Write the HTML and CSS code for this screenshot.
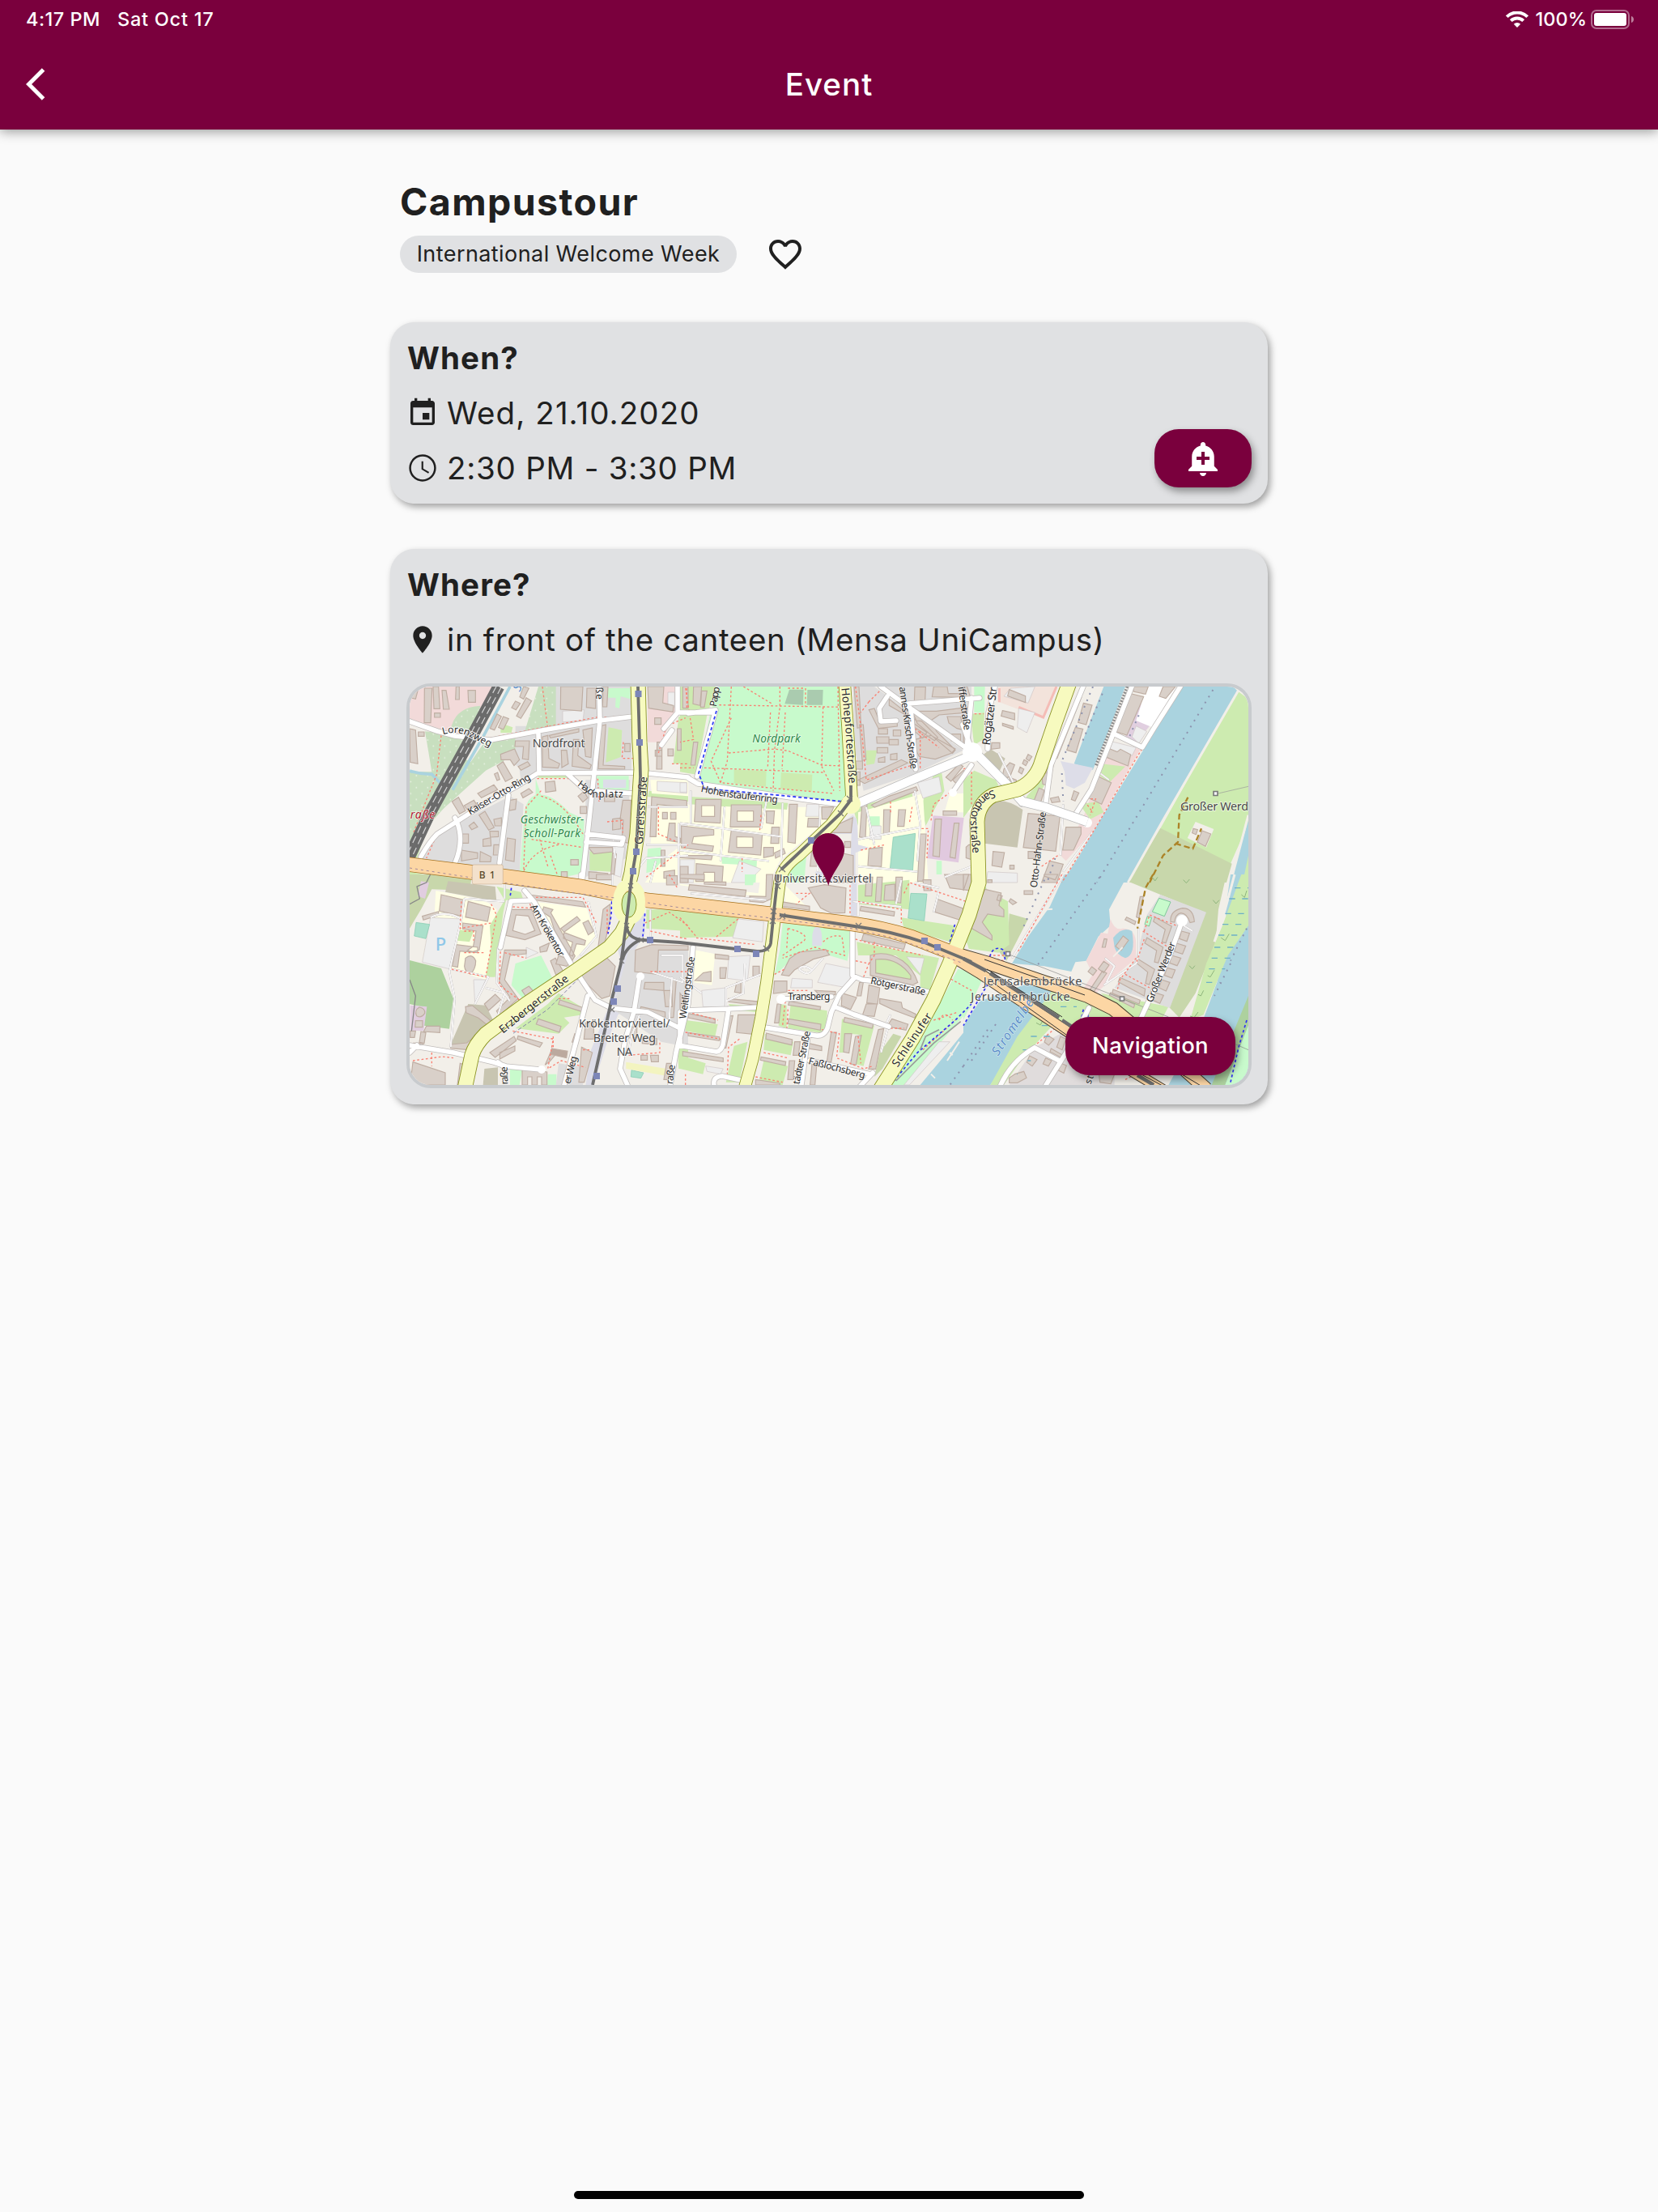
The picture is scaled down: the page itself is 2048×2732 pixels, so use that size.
FILE: index.html
```html
<!DOCTYPE html>
<html lang="en">
<head>
<meta charset="utf-8">
<title>Event</title>
<link rel="stylesheet" href="styles.css">
</head>
<body>
<header class="app-header">
  <div class="status-bar">
    <div class="status-left"><span class="time">4:17 PM</span><span class="date">Sat Oct 17</span></div>
    <div class="status-right">
      <svg class="wifi" viewBox="0 0 28 20"><path d="M14 20l-4.2-4.3a6 6 0 0 1 8.4 0z"/><path class="arc" d="M6.3 11.6a11 11 0 0 1 15.4 0M1.3 6.7a18 18 0 0 1 25.4 0"/></svg>
      <span class="percent">100%</span>
      <svg class="battery" viewBox="0 0 53 24"><rect class="shell" x="1" y="1" width="46" height="22" rx="6"/><rect x="4" y="4" width="40" height="16" rx="3"/><path class="nub" d="M50 8c4 1 4 7 0 8z"/></svg>
    </div>
  </div>
  <div class="nav-bar">
    <svg class="back" viewBox="0 0 24 24"><path d="M11.67 3.87L9.9 2.1 0 12l9.9 9.9 1.77-1.77L3.54 12z"/></svg>
    <h1 class="nav-title">Event</h1>
  </div>
</header>

<main class="content">
  <section class="intro">
    <h2 class="event-title">Campustour</h2>
    <div class="tag-row">
      <span class="chip"><span class="chip-text">International Welcome Week</span></span>
      <svg class="heart" viewBox="0 0 24 24"><path d="M16.5 3c-1.74 0-3.41.81-4.5 2.09C10.91 3.81 9.24 3 7.5 3 4.42 3 2 5.42 2 8.5c0 3.78 3.4 6.86 8.55 11.54L12 21.35l1.45-1.32C18.6 15.36 22 12.28 22 8.5 22 5.42 19.58 3 16.5 3zm-4.4 15.55l-.1.1-.1-.1C7.14 14.24 4 11.39 4 8.5 4 6.5 5.5 5 7.5 5c1.54 0 3.04.99 3.57 2.36h1.87C13.46 5.99 14.96 5 16.5 5c2 0 3.5 1.5 3.5 3.5 0 2.89-3.14 5.74-7.9 10.05z"/></svg>
    </div>
  </section>

  <section class="card when">
    <div>
      <h3 class="card-title">When?</h3>
      <div class="row"><svg class="icon" viewBox="0 0 24 24"><path d="M17 12h-5v5h5v-5zM16 1v2H8V1H6v2H5c-1.11 0-1.99.9-1.99 2L3 19c0 1.1.89 2 2 2h14c1.1 0 2-.9 2-2V5c0-1.1-.9-2-2-2h-1V1h-2zm3 18H5V8h14v11z"/></svg><span class="t-date">Wed, 21.10.2020</span></div>
      <div class="row"><svg class="icon" viewBox="0 0 24 24"><path d="M11.99 2C6.47 2 2 6.48 2 12s4.47 10 9.99 10C17.52 22 22 17.52 22 12S17.52 2 11.99 2zM12 20.5c-4.7 0-8.5-3.8-8.5-8.5s3.8-8.5 8.5-8.5 8.5 3.8 8.5 8.5-3.8 8.500-8.500 8.500zM12.500 7H11.200v6.100l5 3 .7-1.100-4.400-2.600z"/></svg><span class="t-time">2:30 PM - 3:30 PM</span></div>
    </div>
    <button class="btn btn-bell"><svg viewBox="0 0 24 24"><path d="M10.01 21.01c0 1.1.89 1.99 1.99 1.99s1.99-.89 1.99-1.99h-3.98zm8.87-4.19V11c0-3.25-2.25-5.97-5.29-6.69v-.72C13.59 2.71 12.88 2 12 2s-1.59.71-1.59 1.59v.72C7.37 5.03 5.12 7.75 5.12 11v5.82L3 18.94V20h18v-1.06l-2.12-2.12zM16 13.01h-3v3h-2v-3H8V11h3V8h2v3h3v2.01z"/></svg></button>
  </section>

  <section class="card where">
    <h3 class="card-title">Where?</h3>
    <div class="row"><svg class="icon" viewBox="0 0 24 24"><path d="M12 2C8.13 2 5 5.13 5 9c0 5.25 7 13 7 13s7-7.75 7-13c0-3.87-3.13-7-7-7zm0 9.5c-1.38 0-2.5-1.12-2.5-2.5s1.12-2.5 2.5-2.5 2.5 1.12 2.5 2.5-1.12 2.5-2.5 2.5z"/></svg><span class="t-place">in front of the canteen (Mensa UniCampus)</span></div>
    <div class="map">
      <svg class="map-svg" viewBox="506 848 1036 492">
        <defs>
          <pattern id="orchard" width="42" height="44" patternUnits="userSpaceOnUse"><rect width="42" height="44" fill="#c8dfbf"/><circle cx="10" cy="10" r="3" fill="#e3efdd"/><circle cx="31" cy="32" r="3" fill="#e3efdd"/></pattern>
          <path id="hohe" d="M598 60 L612 200 L626 420"/>
          <path id="sand" d="M112 437 C60 452 24 500 26 560 C27 620 34 650 38 710"/>
          <path id="hst" d="M76 443 L165 462 L370 486"/>
          <path id="lor" d="M172 232 C215 218 250 228 278 244 L340 275"/>
        </defs>

        <!-- land use -->
        <g transform="translate(490 830) scale(.33333)">
          <path class="resid" d="M585 54H870V375H520L440 345V200L585 200zM60 690L150 600 420 460 470 490 455 745zM700 400H865L850 690 700 760zM440 250L520 235 520 370 460 400z"/>
          <path class="indus" d="M48 54H360L250 260 130 220 48 190zM930 54H1040V140L980 260H930z"/>
          <path class="orch" d="M205 195Q225 130 310 125L290 220 200 210zM105 220L280 240 180 440 100 560 48 650V370H130zM325 260L440 240V305L330 365 250 420 90 600 200 440zM525 54H590V210L470 235z"/>
          <path class="orch" d="M250 320L330 365 80 590 48 690V640L150 500z"/>
          <path class="park" d="M515 395L535 455Q580 455 640 520L695 545 690 745 600 765 455 745 475 510Q485 465 515 455zM780 60H865V100L830 90 825 135 810 130 812 95 780 95zM740 385H860V445L755 440zM930 655L980 650V730L925 745z"/>
          <path class="grass" d="M785 205L835 215 830 315 775 335zM525 380L640 378 650 392H525zM935 440L1080 455V480L930 462zM715 665L800 655 795 740 715 735zM385 190L430 205 425 225 385 225zM48 740L200 770H48zM1045 165H1080V340H1025zM60 640L105 600 75 690 48 700z"/>
          <path class="edu" d="M940 400H1080V460L945 450zM960 480L1080 500V640L940 640zM1060 640H1080V780H920L990 690z"/>
          <path class="lot" d="M615 145L695 140 690 180 615 185zM800 640L845 650 830 760 800 750zM1005 75H1030V130H1005zM965 405L1075 410V450L965 440z"/>
          <path class="ped" d="M765 398H850V430H765z"/>
          <path class="canal" d="M420 54L320 240 207 437M48 366Q90 380 130 378L160 410"/>
        </g>
        <g transform="translate(840 830) scale(.33333)">
          <path class="grass" d="M0 54H135L100 160 60 380 0 370zM40 462L400 485 395 515 40 490zM680 285L720 280 725 360 680 420zM940 380L970 375 980 440 910 570 895 490zM640 500L860 450 880 560 680 640zM670 650L860 600V745L670 730z"/>
          <path class="edu" d="M0 490L400 510 385 670 330 780H0zM400 500H600L380 690zM660 520L900 450 920 780H660zM1000 450H1080V520H980z"/>
          <path class="park" d="M145 54H600L625 440 600 480 340 450 90 430 68 380 110 160zM700 535H740V575H700zM385 750L470 660 460 780H380zM155 685L285 700 280 780H240L245 715 155 710zM950 700H970V750H950z"/>
          <path class="resid" d="M640 54H720L1050 290 860 380 680 440 650 300zM730 54H1080V280L860 140z"/>
          <path class="grass" d="M200 362L320 366 318 425 200 412zM375 372L490 380 488 442 372 432zM690 290H730L720 340 690 345z"/>
          <path fill="#aacbaf" d="M405 65L458 65 456 122 388 118zM472 66H530L528 122 470 122z"/>
          <path class="pitch" d="M790 612L872 598 862 740 778 730z"/>
          <path class="lot" d="M880 410L960 388 970 445 900 468zM470 490H515V535H465zM705 570H745V620H702zM220 700L300 730 250 780H190zM0 695H55L50 780H0zM0 560L30 560 10 620 0 620zM0 410H25V445H0z"/>
          <path class="ped" d="M640 530L655 545 660 640 700 650 650 670 650 780H630L635 600 570 600 560 585zM500 740H620V780H510z"/>
          <path fill="#e1c9df" d="M938 532L1052 540 1032 706 916 690z"/>
        </g>
        <g transform="translate(1190 830) scale(.33333)">
          <path class="park" d="M40 54H80L78 150 40 150z"/>
          <path class="grass" d="M25 155L78 150 75 250 40 270zM0 400L40 365 120 400 130 420 60 460 0 540zM235 460L290 400 300 420 260 490 225 490zM1015 70L1056 100V560L990 710 730 580z"/>
          <path fill="#f3e3db" d="M130 54H345L295 172 130 110z"/>
          <path fill="none" stroke="#f5bcb6" stroke-width="9" d="M345 54L296 168 205 130M133 60V112"/>
          <path fill="#c8c5b1" d="M70 310L100 285 155 320 135 365zM80 500Q130 450 220 510L200 650 78 635z"/>
          <path class="scrub" d="M730 578L995 710 975 780H610z"/>
          <path class="indus" d="M530 300L660 280 590 400 480 590 380 700 355 675 440 550z"/>
          <path fill="#e1cfe0" d="M610 185L680 90 760 60 720 140 690 200 640 260 600 240z"/>
          <path fill="#fff" d="M680 54H790L700 205 640 180z"/>
          <path class="grass" d="M510 340L600 350 540 410 500 380zM430 490L500 480 520 520 470 545z"/>
          <path class="lot" d="M205 135L265 150 235 225 200 205zM540 255L640 280 625 310 545 290zM640 200L680 220 650 265 625 240zM90 740L200 745V780H85zM175 60L265 54 240 115 150 90z"/>
          <path class="water" d="M520 54H600L545 200 480 362 410 340 440 260zM810 54H1000L1015 70 745 540 610 780H365L430 680 500 560 580 430 660 300 740 170zM1056 550V780H990L1020 670z"/>
          <path class="ped" d="M360 330L480 355 450 410 410 432 380 420 375 370z"/>
          <path class="shore" d="M1018 70L745 540 610 780M1056 530L990 780"/>
          <path fill="#cdebb0" d="M1056 680L1035 780H1056z"/>
          <path fill="#f2efe9" d="M860 555L928 582 900 650 830 615z"/>
        </g>
        <g transform="translate(490 1080) scale(.33333)">
          <path class="scrub" d="M48 0H280L270 60 130 55 90 130 48 200z"/>
          <path fill="#c8c5b1" d="M190 25L365 45 370 100 180 65zM265 480L330 485 365 555 280 640 200 630zM325 720L375 715V780H320z"/>
          <path class="edu" d="M145 60L250 80 340 105 370 130 330 390 200 350 95 320 120 180 140 150zM500 100L705 125 740 240 650 320 560 180z"/>
          <path class="grass" d="M370 45L460 65 470 95 405 95 395 140 365 380 330 380 350 270 345 190 400 95zM600 440L700 500 690 520 620 530 640 550 600 590 440 570 560 480zM925 130H1080V210L925 200zM230 205L285 210 270 250 225 245zM1040 640H1080V720H1045z"/>
          <path class="park" d="M440 330L535 300 580 390 480 475 425 410zM420 705L468 712 455 780H420zM560 740H592V780H558zM500 0H595L590 12z"/>
          <path fill="#add19e" d="M48 318L165 348 210 460 195 572 100 560 90 490 48 480z"/>
          <path fill="#e1cde0" d="M50 485L112 490 100 580 50 578zM90 25L120 30 105 90 78 80z"/>
          <path class="lot" d="M125 160L240 165 195 350 95 325zM285 390H330L290 480zM480 270L525 290 480 310z"/>
          <path class="pitch" d="M72 178L122 185 108 238 65 228zM870 725L915 735 905 755 868 750z"/>
          <path class="ped" d="M850 200L920 140 920 220 870 300 850 500 820 520 780 620 730 780H700L720 650 790 480 830 320 815 260z"/>
          <path class="resid" d="M860 280L1080 270V640L980 620 800 500zM600 700L700 715 690 780H590z"/>
          <path fill="#f3f4c0" d="M850 695L1000 720 990 745 850 720z"/>
        </g>
        <g transform="translate(840 1080) scale(.33333)">
          <path class="grass" d="M0 135L220 160 200 230 0 235zM20 540L140 555 130 600 20 580zM0 670L95 700 85 740 0 720zM200 635L250 620 220 770H170zM315 590L420 620 410 670 310 650zM310 690L400 710 380 780H290zM410 480L545 505 545 590 400 570zM600 535L720 560 680 710 640 700 670 595 630 590 620 660 590 660zM655 250L960 310 925 430 890 420 890 375 800 300 660 300zM820 160L1020 190 1000 250 830 200zM660 40L850 20 850 130 660 110zM1060 250L1080 200V280zM180 480L300 490 280 510 190 500zM370 480L395 485 395 570 365 560z"/>
          <path class="park" d="M380 180L640 210 620 320 520 290 440 290 350 375 370 280zM1030 350L1080 360V490L830 780H780L900 600zM240 0H280L270 40 240 40z"/>
          <path class="edu" d="M55 280L130 295 118 410 52 400zM0 40L340 90 340 0H300L290 70 0 35zM390 40L480 130 390 120z"/>
          <path class="lot" d="M215 165L310 175 305 250 195 235zM180 305L260 300 250 395 175 385zM540 330L640 350 620 420 510 400zM415 385L490 390V420H410zM840 305L905 310 890 370zM960 620L1000 620 850 780H830zM95 710L160 720 150 740 100 730zM80 430L170 420 165 495 85 490z"/>
          <path fill="#c8d7ab" d="M790 590L820 600 750 720 720 750 740 660z"/>
          <path class="ped" d="M490 225Q495 190 512 192 530 205 525 265H490zM635 0H655V155H632z"/>
          <path class="pitch" d="M855 70L915 72 905 172 845 162z"/>
          <path class="water" d="M1080 550V780H890L990 660z"/>
        </g>
        <g transform="translate(1190 1080) scale(.33333)">
          <path class="scrub" d="M640 0H975L945 130 935 250 860 440 800 530 760 490 890 140 615 28zM170 145L240 165 160 320 110 260 165 230z"/>
          <path class="water" d="M375 0H610L540 130 545 190 500 230 455 320 415 325 400 360 300 340 180 330 240 230 320 120zM0 560L60 470 250 400 330 430 280 510 100 780H0zM990 0L1056 0V780H760L880 560 940 400 990 200 970 140z"/>
          <path class="reed" d="M1030 0H1056V190L980 300 890 520 840 540 900 330 960 190zM330 430L620 530 620 600 400 600 330 560 220 680 150 780H100L200 600zM510 440L760 490 740 528H600z"/>
          <path fill="#add19e" d="M1056 450V560L970 780H920z"/>
          <path class="park" d="M1056 560V750L1030 780H970zM0 340L70 390 0 540z"/>
          <path class="indus" d="M545 165Q560 210 590 200 640 200 640 260L640 310 570 370 480 450 430 445 480 370 455 320 510 215 535 220z"/>
          <path class="water" d="M555 235Q590 190 625 210 640 300 600 310 570 300 560 270z"/>
          <path class="resid" d="M730 75L900 140 765 495 560 420 640 310 680 150z"/>
          <path class="grass" d="M60 0L90 60 165 100 170 260 130 290 20 275 10 240z"/>
          <path class="park" stroke="#7fc79a" stroke-width="3" d="M725 88L768 102 745 155 700 138zM682 155L698 160 688 192 672 185z"/>
          <path fill="#e0dcdc" d="M265 640L380 580 560 700 560 780H170z"/>
          <path class="shore" d="M1005 0L970 130 930 250"/>
        </g>

        <!-- buildings -->
        <g class="bld" transform="translate(490 830) scale(.33333)">
          <path d="M103 60h28l-5 128h-24zM135 54h20l5 82h-22zM168 68h15l12 70h-22zM264 68h28v44h-26zM48 210l22 5 8 125-28-6zM60 60l18 10-8 30-20-5zM140 152h22v16h-22zM220 54h12v48h-14zM80 222h22v16h-22z"/>
          <path d="M480 95l20 12-40 65-16-9zM470 54l20 6-20 40-14-8zM372 155l16 10-26 50-16-6zM395 165l20 8-20 40-18-8zM440 108l18 8-16 24-16-8z"/>
          <path d="M608 54h82l-5 90-78-6zM705 60h32v75l-34-4zM440 255l52 0-4 70-22-4 4-45-32 0zM540 240l20-5 4 85 40 20-6 16-58-4zM565 235l110-25 0 12-105 22zM610 290h20l6 50-24 14zM655 250l20 0-4 60 50 35-5 14-66-10zM690 215l35-8-5 110-20-4zM755 200l20-5-10 150 80 5v10l-98-2zM765 54h18l-4 75h-16z"/>
          <path d="M385 305l52-20 18 40-20 22-14-22-34 0zM372 348l22-16 35 60-26 14zM362 378l12-6 8 26-10 4zM450 350l35-18 10 14-34 18zM205 480l24-16 26 50-22 12zM250 495l36-20 10 16-34 20zM300 450l60-32 14 18-60 30zM460 450l30-18 14 14-36 20zM550 408l35-4 5 36-38 6zM672 460l22-18 14 24-18 16zM680 498h24v26h-24z"/>
          <path d="M420 475l24-4-4 38-22 4zM305 530l22-14 34 60-20 10zM360 546l28-6 0 30-24 0zM268 570l18-14 14 18-22 10zM240 600l26 0 0 34-26 0zM320 620l28-6 2 30-30 2zM345 590h32v20l-30 2zM360 640h22v38h-24zM240 660l60 10 0 20-60 10zM410 615l30 5-5 82-32-6zM310 665l40 20-2 18-40 0z"/>
          <path d="M930 54h60l-4 60 40 10-2 24-90-14zM965 260h18v100h-20zM1060 54h20v80h-20zM958 290h25v22h-25zM1040 210h14v80h-14zM770 460h38v20h-38zM838 475l30 0-4 160-30-6 6-80-12-4zM945 462l130 14v26l-110-12-4 120h-22zM985 520h18v24h-18zM1015 520h20v26h-20zM1010 560h22v50l20 6v16l-50-8zM710 650l90 0v16l-70 8zM712 740l70 6v20h-70zM800 670l14 4-8 76-12-2zM645 695h28v20h-28zM610 740h22v24h-22zM980 660h14v60h-14zM990 740l40-6v30h-40zM800 545l30-4v40l-30 4zM956 170h24v24h-24zM1005 285h20v26h-20zM845 265h20v30h-20z"/>
        </g>
        <g class="bld" transform="translate(840 830) scale(.33333)">
          <path fill-rule="evenodd" d="M58 472h95l-4 88-96-6zM80 495v40h48v-40zM190 492h112v82h-116zM212 515v38h60v-38zM190 585l115 15-6 78-120-10zM210 610v40h60v-38zM405 490l30 0-8 145-28-5zM0 680h120l-4 16-116-8zM60 710l100 10-4 60-28-4v-34h-40v34l-30 0zM5 570l120 14v20l-75 6-6 25 80 10-4 20-115-14z"/>
          <path d="M320 515l30 0-4 48-26-4zM340 575l28 0-2 60-30 0zM475 542h45v32h-48zM525 500h45l-20 45h-24zM550 580l90-40-6 55-76 0zM490 640l60 20 92 20 0 100h-60l-60-60h-40zM610 628h22v22h-22zM700 655l50-6-4 72-50-4zM755 510h25l-5 90h-22zM810 510h26l-6 62h-24zM675 485h18l-6 130-22-4zM775 460l100-35 6 14-160 62-12-8z"/>
          <path d="M945 545l24 0-8 140-24-4zM1016 560l18 0-14 130-20-4zM975 515h50v16l-50 0zM890 600l22 0-10 175-22 0zM985 390l50-50 14 10-45 55zM1010 400l40-36 10 14-36 36zM645 54h18l8 150-14 4zM665 195l14 0 10 130-14 3zM640 330h36v30h-34zM660 400l160-75 24 12-160 76zM655 370h12v50h-12z"/>
          <path d="M700 140l20-5 20 50 65-6v22l-70 8zM735 210h34v20h-34zM790 215h28v22h-28zM728 240h46v24h-44zM730 280h40v20h-40zM735 320l24-6v20h-24zM775 250h34v20h-34zM780 305l24-4v24h-24zM775 100l100 80 20 2 60 60-12 12-90-60-8-30-70-40zM865 190l50 34-16 20-44-36zM940 54l50 0 4 26 50 0v14l-110-2zM870 55h40l-2 50-40 8zM860 145l90 0 130-16v20l-120 10-30 20 20 40 70 70-10 12-130-110zM870 250l60-15 90 50-14 16-60 22-60-10-20-40zM990 165l50 0 10 50-24-6-30-20zM1000 230h40v30l-36-6z"/>
          <path d="M50 54l30 0-6 70-26-6zM50 260l16 0-10 85h-16zM80 70h20l-10 60h-14zM310 650l36 0v30l-36 8zM0 720h30v60H0zM350 670l34-16 6 18-36 18z"/>
        </g>
        <g class="bld" transform="translate(1190 830) scale(.33333)">
          <path d="M170 65l60 24v24l-66-24zM145 143l45 10v24l-50-14zM145 190l40 12v10l-40-14zM105 262l30 0v20l-32 4zM0 54h14l12 40-26 10zM0 230h14v40H0zM150 360l22-24 18 8-16 40-12 8-16-12zM240 305l14 8-10 16-12-8zM225 325l14 8-8 14-12-8zM210 352l14 8-8 18-12-8zM170 390l26 10v12h-20zM425 95h12l-90 225-20 0zM445 115l32 8-22 72-30-8zM415 205l28 6-26 88-34-10zM305 340l30 0-8 34-24-4zM290 375h28v48l-24-8zM280 430l20 8-16 54-26-6zM410 440l18 8-14 30-14-6z"/>
          <path d="M612 78l56 14-62 142-44-14zM630 54h55l-10 28-45-10zM740 54h46l-36 44-24-8zM530 280l40 16 12-10 38 20-10 42-85-34zM498 386l50 24-36 80-50-24zM240 524l118 10-16 130-120-14zM380 575l56 0v25l-28 60-40 0zM110 665l42 4-10 54-36-6zM240 665h28v26h-28zM172 716h16v14h-16zM20 640h10v55l-20-6v-40zM320 700l50 12-24 68h-56zM322 468l30-6 6 18-30 4z"/>
          <path d="M885 588l32 12-20 46-30-16zM852 580l16 4-6 18-14-6zM90 770h16v10H90z"/>
        </g>
        <g class="bld" transform="translate(490 1080) scale(.33333)">
          <path fill-rule="evenodd" d="M165 75l87 20-10 60-84-20zM265 100l82 22-10 52-82-16zM95 155l60-18v14l-56 18zM425 130l75 0 35 90-60 22-70-16zM442 150l46 4 24 54-36 14-46-14zM245 180l75 10-14 90-24 6-20-4 22-16 10-56-50-8zM220 260l80 10v20l-66-6-8 60-20-4z"/>
          <path d="M255 310q25-20 38 10 0 30-20 50-20-10-22-30zM400 280l80 0v14l-60 6-20 90 50 70-70 64-10-18 50-50-40-60zM325 480l40-36 20 20-44 40zM464 430l26-16 20 22-28 20zM545 120l34 10-8 12 90 160-10 16-66-110-16-50-30-20zM608 200l60-44 12 14-60 44zM620 215l80 30-4 16-30-4-14 46-12-6 12-46-34-14zM690 180l20-10 20 40-20 14zM570 320l18-10 30 50-28 12zM490 75l200 26 10 20-200-28zM765 130l26-20v60l-24 100-20-4zM530 270l36-16-10 30-24 4z"/>
          <path d="M255 490l26-4 60 50 20 20-8 16-50-40-46-20zM200 630l60-6 50-40 8 14-50 52-68-6zM605 465l90 30-6 14-90-28zM525 535l84 28-6 22-86-30zM450 598l90 26-10 16-84-30zM345 660l90-60 8 16-78 62zM382 660l56-24v18l-56 30zM465 720l92 12v48h-20v-30h-16v30h-20v-30h-16v30h-20zM570 690l20-24-14-20-26 60zM60 695l120 40 0 45H50zM235 700l14 4-10 76h-14zM110 562h50v24l-60-4zM90 582l18 4-6 40-18-4zM50 580h20l-4 24H50zM62 625h36v10H62z"/>
          <path d="M680 370l90-70 40 40-20 110-30 10-60-60zM885 280l60-20 135 4v16l-110 0-4 90-84-10zM905 490l90 20v20l-95-20zM990 430l30 0 2 60-26 0zM1020 390h16l-10 140h-16zM685 640l40 20-30 110h-20zM660 590l20 5-10 30-20-4zM860 565h30v40h-30zM910 600l54 8v22l-54-4zM940 670h30v24l-26 0zM905 670h24v18h-24zM920 400l70 0v30l-74-6zM700 550h30v60h-36zM1000 700h20v60h-30zM740 0l60 0v20h-60zM1000 5h40v34h-40z"/>
          <path fill="#bba99e" d="M575 645l58 10-4 25-60-14z"/>
          <path d="M84 492q22 4 20 22-12 20-30 10-10-20 10-32zM70 542h26v24h-28zM600 300l50 20-20 20-40-8z"/>
        </g>
        <g class="bld" transform="translate(840 1080) scale(.33333)">
          <path d="M35 38l210 20-4 24-210-24zM0 0h90v20l-90-6zM90 28h80v12l-80-4zM320 0h24l-6 90-30 14-50-4v-20l60 2zM370 100l110 18v14l-110-14zM475 50l60-12 80 12-4 92-50 2-40-20zM670 118l125 20-2 16-126-20zM680 220l155 38-6 20-156-34zM440 288l100-10 14 20-60 16-70 40-20 22-28-4 30-60zM705 300q60-20 120 20 40 30 56 80l-20 10-156-36z"/>
          <path d="M350 395l46 0v40l-50 6zM665 400l14 0-8 50h-16zM600 440l54 16-22 44-34-14zM700 410l40 10-8 60-40-4zM690 480h40l-10 46-44-4zM740 460l80 14 4 20 50 24-4 14-80-30-50-24zM360 480l14 0-8 70h-16zM405 470l116 20-2 12-118-18zM402 535l120 20-2 22-120-24zM610 530l106 24-4 16-106-24zM785 535l60 20-8 22-70-14zM610 590h26l-10 72-20-4zM650 600l22-4-20 110-20-4zM560 585l20 0-20 110h-16zM735 575l20-4-30 150h-26zM215 520l70 0-14 72-62-6zM180 525l16-2-26 120h-16zM30 515l100 20v16l-100-20zM30 586l116 16v14l-116-18zM10 656l150 24v14l-150-22zM320 588l96 24-2 20-96-22zM300 676l92 18-2 14-92-20zM425 620l20 0-6 50h-20zM180 460l120 12v14l-120-14zM270 340h24v36h-24zM130 295l50 6v14l-50-4zM85 365l30-6v38l-60-4zM148 345l24 0-4 40h-20zM210 400l16 0v40l-24-4zM0 440l40 60H0zM475 625l50 12v16l-52-8zM405 690h20l-6 70h-20zM280 760l90 14v6h-90zM490 690h18l-8 90h-18zM500 430l76 4v12h-60z"/>
          <path d="M950 90l110 40-20 40-95-30zM980 0h100v60l-80-10zM690 10h24l-4 70h-24zM730 10l20 0-6 90h-20zM760 40l36-4v60l-40 0zM800 10h24l-6 96-20-4zM900 20h30v40h-26z"/>
          <path fill="#cdebb0" d="M725 315q80-10 130 60v14l-130-24z"/>
        </g>
        <g class="bld" transform="translate(1190 1080) scale(.33333)">
          <path d="M80 55l60 14-8 46 18 16v26l-60-10-20 30 36 50v16l-80-46 20-60zM175 90l22 14-14 8-14-12zM225 60h32v14h-32zM130 75l14 4-6 20-14-4zM0 0h20L0 60zM300 0h50l-10 20-40-14z"/>
          <path d="M655 82h12l-16 80-10-4zM605 158l34 16-4 12-36-18zM710 158l62 34-22 62-14-4 12-46-44-30zM768 175q-4-40 44-50 40 0 44 50l-16 4q-10-34-34-36-20 4-24 34zM680 234l60 36-18 58-14-4 8-42-44-28zM645 312l64 40-20 56-14-4 8-42-42-34zM580 382l94 42-4 26-96-52zM555 426l100 40-4 14-100-40zM545 438l90 44-4 12-90-46zM808 210l30 8-10 30-28-10zM790 255l34 10-12 30-30-10zM772 300l34 10-14 28-28-10zM755 346l30 8-12 30-28-10zM735 390l30 10-14 32-26-12zM712 438l30 10-14 30-26-12z"/>
          <path d="M592 228l20 16-28 38-20-16zM522 238l10 2-6 30-12 0zM520 322l20 14-20 28-20-14zM476 342l18 14-14 18-18-14zM515 358l16 8-54 78-14-8zM310 595l26 16-20 22-16-12zM360 600l20 10-14 40-20-10zM325 645l46 26-4 10-46-24zM245 672l28 14-18 24-20-14zM305 680l22 10-12 20-20-8zM190 740l34-10 10 24-34 18-30 0 0-18zM362 700l20 8-10 28-20-10zM500 720l60 20-14 36-40-6z"/>
        </g>

        <!-- service roads, footpaths and cycle routes -->
        <g transform="translate(490 830) scale(.33333)"><g class="service">
          <path d="M925 640L1080 640M1045 560V780M860 770L925 690 1080 680M800 600L810 690M930 500H1080M960 700L940 780"/></g>
          <g class="walk"><path d="M165 235L148 380 60 600M540 54L560 210M345 245L540 205 740 168 870 165M520 395H650L660 400M535 440L480 500 470 745M535 460Q620 480 690 600M600 640Q500 660 470 740M500 620L690 650M570 680L600 765M530 620L560 720M400 450L150 600 110 690M970 300L1000 200 1070 170M1020 340H1080M780 555L835 550 838 595M745 395L750 480M925 760L1080 640M840 260L835 320H880M1075 60V160M970 500V600L1040 630"/></g>
        </g>
        <g transform="translate(840 830) scale(.33333)"><g class="service">
          <path d="M380 485L375 690M165 500L150 700M0 560L160 580 375 610M320 480L300 580M0 660L150 680 330 700M660 620L890 575M690 500L720 640M870 440L890 560 880 700M660 720L880 740M980 760L1080 720M520 500L510 740M40 440V560"/></g>
          <g class="walk"><path d="M190 54L175 330 150 410M145 122L600 130M370 54V130L350 290 345 440M335 150L325 350M390 150L378 360M180 300L350 285 400 292 525 345 600 348M530 130L525 345M190 170L115 330 150 410 340 430 570 450M525 350L570 440M585 54L592 440M235 54L345 120M90 355L530 372M20 60L50 250 0 260M650 54L675 240 690 400 860 345M300 530L295 590M0 355H50M700 110L670 150M750 60L700 110M895 580L920 580 915 690M930 550L940 490 1010 440M670 660L760 640M230 690V740M870 210L960 280M780 480V520M860 500L850 560M890 220V360M465 60V130M400 60H460"/></g>
        </g>
        <g transform="translate(1190 830) scale(.33333)"><g class="service">
          <path d="M370 490L360 680M130 300L190 420M500 370L540 400M480 590L370 740"/></g>
          <g class="walk"><path d="M30 370V490M25 155H75M805 54L640 320 500 560 365 780M440 470L490 470 470 530M0 360L40 340M450 480L480 520M290 720L350 680"/></g>
          <g class="dots"><path d="M925 66L495 780M480 54L365 330M515 80L440 260M650 160L615 240M365 375L370 480M340 690L310 780"/></g>
          <path fill="none" stroke="#8d8d8d" stroke-width="12" stroke-dasharray="6 5" d="M608 54L490 350"/>
          <g class="track"><path d="M832 464L800 530 795 630 740 680 690 780M785 635L850 655 882 580"/></g>
          <path fill="none" stroke="#999" stroke-width="2" d="M935 452L1056 424"/>
        </g>
        <g transform="translate(490 1080) scale(.33333)"><g class="service">
          <path d="M125 160Q180 130 240 165L195 360 215 460 200 640M250 90L240 165M250 90L400 100M375 270L370 400 420 470M330 420L400 440 370 540 390 560M710 100L740 230 680 300M200 350L340 380 290 480M400 0V90M940 130V260M980 300L1060 300V400L940 360M900 520L870 600 860 660M800 0V100M1020 380L1010 540"/></g>
          <g class="walk"><path d="M240 100L235 200 350 180M350 110L370 150 330 380 200 350M250 290H330M385 270L380 410 475 480M430 120L500 125 480 75M500 85L690 85 740 180M400 290L480 310M430 580L580 610 560 720 610 690 700 715M60 690L170 675 210 680M580 600V640M600 460L640 460M920 180L1010 140 1080 190M940 210L1080 240M690 650H720M860 670L975 660V620M940 360H1080M250 210H285V245M1010 0L1040 50M130 660V710M780 130V220"/></g>
          <g class="cycle"><path d="M425 50L420 85M797 100L795 150 783 220M920 145L912 230"/></g>
          <path fill="none" stroke="#88a" stroke-width="3" stroke-dasharray="14 8" d="M740 320L560 500 430 590"/>
          <path fill="none" stroke="#888" stroke-width="4" d="M125 0L110 30 75 45 85 90 48 110M48 390L70 450 55 580"/>
        </g>
        <g transform="translate(840 1080) scale(.33333)"><g class="service">
          <path d="M40 70L320 95M300 370L170 420V500M240 330L235 440 170 470M640 100L820 120M660 100V155M820 20L800 110M960 60L940 140M440 350Q460 330 490 355 470 380 440 350M490 355L530 310M780 520L760 560M770 570L745 660M0 380L80 440M870 30L960 50"/></g>
          <g class="walk"><path d="M0 160L60 230M60 235L280 260M215 165L130 235M400 200Q480 220 460 245L380 300M400 200L395 280M530 250Q560 220 600 230L610 300 500 270 380 310M390 470L380 560M400 500L395 580M30 510L140 540M20 585L150 610M310 660L400 680M525 575L590 590 580 680 680 720 715 710M650 240L720 260 900 300M720 250V300L700 330 650 320M680 380L700 330M660 600L670 700M430 70H480L430 110M630 40V150M780 570H830M900 650L1020 540M990 380L1080 430M940 540L1030 510M960 540Q980 500 1010 540M400 430H480M350 370L390 350M0 560V600M220 610L180 640 175 740M830 70L850 30 1060 100M280 750L380 770M660 100L820 130V180M20 740V780"/></g>
          <g class="cycle"><path d="M1000 250L1020 180M780 780L880 660 1020 540 1080 480"/></g>
          <path class="pier" d="M1035 620L990 690M930 740L945 755M1000 660L1010 670"/>
          <path fill="none" stroke="#999" stroke-width="5" d="M800 765L940 625 1040 545M890 650L910 600 960 575"/>
          <g class="dots"><path d="M1050 710L1000 780"/></g>
        </g>
        <g transform="translate(1190 1080) scale(.33333)"><g class="service">
          <path d="M650 200L650 300 640 330 520 410M525 310L560 340 530 400M370 0L180 310M800 180L850 210"/></g>
          <g class="walk"><path d="M365 0L200 290M670 210L690 150 790 190M665 210L760 270M670 240L640 330M640 310L580 390 570 430M600 370L690 420M95 300L160 300M110 310L150 320M340 570L270 630M600 760L640 740"/></g>
          <g class="dots"><path d="M505 10L265 350M0 710L100 560M30 690L130 540M990 330L930 450M300 20L220 200M1050 200L990 320"/></g>
          <g class="track"><path d="M703 0L675 50 665 100 645 200"/></g>
          <g class="cycle"><path d="M98 305Q110 260 150 280L155 320M445 500Q430 550 440 590M465 500L460 540M1050 540L1020 640 990 770M100 390L0 560"/></g>
          <path class="pier" d="M555 305L590 270M310 130L330 128"/>
          <path fill="none" stroke="#6db1c6" stroke-width="4" stroke-dasharray="22 26" d="M1005 50H1056M985 90H1056M970 145H1056M960 185H1030M945 225H1030M930 270H1000M920 310H990M910 350H970M900 400H950M250 600H340M220 650H280M190 690H250M150 740H200M290 560H330M360 490H420M380 430H430"/>
          <g class="tuft"><path d="M1030 75L1042 85 1050 60M955 235L970 245 985 220M905 375L915 380 930 355M870 445L880 450 890 430M840 525L855 530 870 510M270 550L285 558 298 535M700 10L710 24 720 10M815 20L826 32 838 18M925 95L936 108 948 95M837 338L848 350 858 338"/></g>
          <path fill="none" stroke="#8a8a8a" stroke-width="2" d="M165 295L588 460 760 528M1010 630L1056 650"/>
        </g>

        <defs><g id="streets">
          <path d="M506 891L540 903 562 909 606 914 670 902 740 890 782 885M740 848L741 890 734 955 727 1020 719 1090M665 905L666 955M701 956L723 976 783 980M520 1058Q530 1040 540 1030L603 990 640 970 664 955 790 954 850 960M628 982L617 1066M562 1010Q575 1035 562 1066M725 1030L770 1035 768 1043 724 1040M837 848V880L820 900M837 880H880M830 902L817 920M850 881L884 877 861 959M850 961L862 968 990 987 1040 994"/>
          <path d="M1088 848L1125 875 1195 925M1122 869L1210 862M1096 860L1086 875 1088 891 1107 890M1125 875L1131 950M1189 895L1200 925M1177 978L1200 945M1220 925L1221 880 1229 848M1338 848L1298 945 1291 997M1398 848L1348 975 1327 1008M1375 906L1411 923 1425 900 1458 848M1200 862L1194 925M1262 993L1250 975"/>
          <path d="M648 1100L660 1114 705 1190 735 1235 755 1245 800 1250 840 1270M655 1112L631 1113 618 1170M726 1230L712 1285 697 1340M790 1206L783 1250 772 1285 766 1320 775 1340M506 1291L560 1300 610 1312 625 1317 668 1321M506 1300L515 1291M842 1270L835 1300 828 1340M843 1248L900 1246 937 1244M856 1170L850 1240 838 1290M900 1246L893 1290Q891 1298 885 1299L838 1291M622 1317L615 1312M718 1080V1091M1053 1150V1205L1065 1210 1100 1214 1150 1226M1056 1207L1037 1228 1027 1250 1022 1270Q1018 1280 1008 1279L945 1269M1030 1243L1055 1253 1098 1268M966 1234L1027 1231M882 1340Q880 1330 892 1329L915 1334M1078 1325L1062 1342M998 1280L990 1340M1000 1310L1076 1327M840 1290L840 1250"/>
          <path d="M1460 1138L1445 1180 1410 1256M1345 1245L1317 1300 1292 1340M1278 1294L1310 1311M1278 1294Q1250 1310 1236 1340"/>
        </g></defs>
        <use href="#streets" class="street-case"/><use href="#streets" class="street-fill"/>
        <g fill="#fff"><circle cx="965" cy="1234" r="6"/><circle cx="1343" cy="1016" r="6"/><circle cx="1460" cy="1137" r="7"/><circle cx="791" cy="1206" r="5"/><circle cx="669" cy="1321" r="5"/><circle cx="1177" cy="979" r="5"/></g>

        <!-- park boundary -->
        <path class="cyc" d="M885 878L863 955 870 974 960 982 1042 990"/>

        <!-- railway -->
        <path fill="none" stroke="#6b6b6b" stroke-width="15" d="M616 848L580 915 530 1006 500 1070"/>
        <path fill="none" stroke="#d4d4d4" stroke-width="1.200" stroke-dasharray="9 5" d="M613 848L577 914 527 1005 497 1068M619 849L583 916 533 1007 503 1071"/>

        <!-- main roads -->
        <defs>
          <path id="white-main" d="M1053 995L1127 963 1200 933M1200 925L1243 968 1263 990 1291 997 1323 1008 1343 1015"/>
          <path id="yellow-main" d="M788 840L790 917 792 950 787 1030 780 1078 777 1090M776 1136L768 1152 753 1170 710 1200 650 1240 600 1277Q587 1290 583 1303L574 1345M1322 840L1303 893 1287 940Q1280 965 1257 975L1227 982Q1208 992 1207 1015L1209 1090 1197 1130 1173 1190 1153 1235 1127 1283 1087 1346"/>
          <path id="yellow-mid" d="M1043 840L1047 897 1052 985 1027 1018 987 1056Q966 1070 963 1090L955 1150 947 1213 940 1257 930 1307 919 1346"/>
          <path id="orange" d="M500 1067L620 1082 717 1095 800 1112 840 1116 953 1129 1053 1141Q1090 1146 1125 1157L1200 1186"/>
          <path id="orange-n" d="M1180 1178L1222 1190 1290 1213 1343 1230 1375 1246 1440 1300 1490 1345"/>
          <path id="orange-s" d="M1180 1184L1210 1202 1250 1229 1317 1273 1380 1312 1440 1348"/>
        </defs>
        <use href="#white-main" class="mw-case"/><use href="#white-main" class="mw"/>
        <circle cx="1201" cy="929" r="12" fill="#fff"/>
        <use href="#orange" class="or-case"/><use href="#orange-s" class="os-case"/><use href="#orange-n" class="on-case"/>
        <use href="#yellow-main" class="ym-case"/><use href="#yellow-mid" class="yd-case"/>
        <ellipse cx="777" cy="1114" rx="20" ry="27" class="ring-case"/>
        <use href="#yellow-main" class="ym"/><use href="#yellow-mid" class="yd"/>
        <circle cx="1051" cy="993" r="12" fill="#f7fabf"/>
        <use href="#orange" class="or"/><use href="#orange-s" class="os"/><use href="#orange-n" class="on"/>
        <ellipse cx="777" cy="1114" rx="14" ry="21" class="ring"/>
        <ellipse cx="777" cy="1117" rx="9" ry="16" fill="#cdebb0" stroke="#8c9425" stroke-width="1"/>
        <path class="lane" d="M506 1072L620 1090 717 1104 760 1109M800 1115L840 1121 953 1134 1053 1147 1110 1160 1190 1190"/>

        <!-- tram -->
        <g class="tram"><path d="M788 848L790 917 791 960 786 1050 780 1085 773 1145 767 1190 755 1237 732 1340M774 1143Q775 1160 795 1161L840 1164 935 1175Q950 1175 952 1165L956 1125 961 1080M792 1160Q772 1170 769 1185M1051 970V988L1038 1005 965 1074M963 1130L1062 1145Q1100 1150 1142 1164L1200 1188"/></g>
        <path fill="none" stroke="#6e6e6e" stroke-width="4.500" d="M1190 1184L1218 1199M1223 1202L1308 1257M1312 1260L1330 1272M1405 1328L1425 1340"/>
        <path fill="none" stroke="#333" stroke-width="1" d="M1219 1197L1312 1256M1216 1185L1290 1211 1340 1229M1220 1209L1317 1278M1440 1315L1485 1342M1408 1326L1436 1341"/>
        <g fill="#7d86b8"><path d="M784.500 853h8v8h-8zM786 913h8v8h-8zM782 1048h8v8h-8zM778 1072h8v8h-8zM799 1157h8v8h-8zM759 1217h8v8h-8zM754 1233h8v8h-8zM733 1325h8v8h-8zM998 1034h8v8h-8zM907 1168h8v8h-8zM930 1174h8v8h-8zM1138 1158h8v8h-8zM1154 1166h8v8h-8z"/></g>
        <path class="cross" d="M776 1091l6 6m0-6l-6 6M771 1140l6 6m0-6l-6 6M789 1158l6 6m0-6l-6 6M765 1184l6 6m0-6l-6 6M753 1244l6 6m0-6l-6 6M1046 983l7 7m0-7l-7 7M1035 1001l7 7m0-7l-7 7M962 1069l8 8m0-8l-8 8M957 1091l7 7m0-7l-7 7M952 1122l7 7m0-7l-7 7M963 1128l7 7m0-7l-7 7M951 1134l7 7m0-7l-7 7M943 1168l7 7m0-7l-7 7M1057 1140l7 7m0-7l-7 7"/>
        <path fill="#f4f4f8" stroke="#777" stroke-width="1.600" d="M1499 977.500h5v5h-5zM1242.500 1175.500h5v5h-5zM1383.500 1231h5v5h-5z"/>

        <!-- labels -->
        <g class="lb" transform="translate(490 830) scale(.33333)">
          <text class="pl" x="503" y="280" textLength="195">Nordfront</text>
          <text class="st halo"><textPath href="#lor">Lorenzweg</textPath></text>
          <text class="st" transform="translate(272 530) rotate(-30.500)" textLength="263">Kaiser-Otto-Ring</text>
          <text class="st" transform="translate(668 420) rotate(36)" textLength="66">Hayd</text>
          <text class="st" x="724" y="464" textLength="115">nplatz</text>
          <text class="gr" x="458" y="560" textLength="236">Geschwister-</text>
          <text class="gr" x="470" y="611" textLength="211">Scholl-Park</text>
          <text class="rd" x="50" y="542" textLength="92">raße</text>
          <text class="st big" transform="translate(911 640) rotate(-86)" textLength="252">Gareisstraße</text>
          <text class="st" transform="translate(738 56) rotate(88)" textLength="46">ße</text>
          <text class="wt" transform="translate(455 75) rotate(-62)">S</text>
          <rect class="shield" x="280" y="714" width="114" height="72" rx="6"/>
          <text class="sh" x="305" y="764" textLength="60">B 1</text>
        </g>
        <g class="lb" transform="translate(840 830) scale(.33333)">
          <text class="gr" x="268" y="260" textLength="178">Nordpark</text>
          <text class="st" transform="translate(134 130) rotate(-80)" textLength="74">Papp</text>
          <text class="st big"><textPath href="#hohe" textLength="354">Hohepfortestraße</textPath></text>
          <text class="st"><textPath href="#hst" textLength="288">Hohenstaufenring</textPath></text>
          <text class="st" transform="translate(812 56) rotate(82)" textLength="308">annes-Kirsch-Straße</text>
          <text class="st" transform="translate(1030 56) rotate(82)" textLength="162">ifferstraße</text>
          <text class="pl" x="348" y="780" textLength="362">Universitätsviertel</text>
        </g>
        <g class="lb" transform="translate(1190 830) scale(.33333)">
          <text class="st big" transform="translate(98 272) rotate(-83)" textLength="216">Rogätzer Str</text>
          <text class="st big"><textPath href="#sand">Sandtorstraße</textPath></text>
          <text class="st" transform="translate(272 800) rotate(-83)" textLength="282">Otto-Hahn-Straße</text>
          <text class="pl" x="804" y="513" textLength="252">Großer Werd</text>
        </g>
        <g class="lb" transform="translate(490 1080) scale(.33333)">
          <text class="pk" x="143" y="282">P</text>
          <text class="st" transform="translate(494 120) rotate(60)" textLength="216">Am Krökentor</text>
          <text class="st big" transform="translate(394 590) rotate(-39)" textLength="316">Erzbergerstraße</text>
          <text class="pl" x="675" y="566" textLength="338">Krökentorviertel/</text>
          <text class="pl" x="728" y="620" textLength="232">Breiter Weg</text>
          <text class="pl" x="815" y="673" textLength="58">NA</text>
          <text class="st" transform="translate(412 778) rotate(-92)" textLength="66">raße</text>
          <text class="st" transform="translate(643 778) rotate(-76)" textLength="104">er Weg</text>
          <text class="st" transform="translate(1022 778) rotate(-82)" textLength="72">raße</text>
        </g>
        <g class="lb" transform="translate(840 1080) scale(.33333)">
          <text class="st" transform="translate(22 536) rotate(-82)" textLength="232">Weitlingstraße</text>
          <text class="st" transform="translate(704 404) rotate(12)" textLength="208">Rötgerstraße</text>
          <text class="st" x="400" y="466" textLength="156">Transberg</text>
          <text class="st" transform="translate(442 779) rotate(-78)" textLength="200">tädter Straße</text>
          <text class="st" transform="translate(474 702) rotate(14.500)" textLength="216">Faßlochsberg</text>
          <text class="st big" transform="translate(806 716) rotate(-56)" textLength="230">Schleinufer</text>
        </g>
        <g class="lb" transform="translate(1190 1080) scale(.33333)">
          <text class="pl" x="74" y="412" textLength="365">Jerusalembrücke</text>
          <text class="pl" x="28" y="468" textLength="367">Jerusalembrücke</text>
          <text class="wt" transform="translate(128 674) rotate(-56)" textLength="240">Stromelbe</text>
          <text class="st" transform="translate(700 476) rotate(-68.500)" textLength="236">Großer Werder</text>
          <text class="st" transform="translate(472 779) rotate(-70)" textLength="50">str</text>
        </g>
        <path fill="#7a003d" d="M1023.300 1094C1019 1077 1003.500 1064 1003.500 1049a19.800 20 0 0 1 39.600 0C1043 1064 1027.600 1077 1023.300 1094z"/>
      </svg>
      <button class="btn btn-nav"><span>Navigation</span></button>
    </div>
  </section>
</main>
<div class="home-indicator"></div>
</body>
</html>
```
FILE: styles.css
```css
* { box-sizing: border-box; }
body { margin: 0; width: 2048px; height: 2732px; background: #fafafa; color: #202020; font-family: Inter, "Liberation Sans", sans-serif; display: flex; flex-direction: column; align-items: center; overflow: hidden; }
h1, h2, h3 { margin: 0; }
span { white-space: nowrap; }

.app-header { width: 100%; height: 160px; flex: none; background: #7a003d; color: #fff; box-shadow: 0 2px 14px rgba(0,0,0,.42); }
.status-bar { height: 48px; display: flex; justify-content: space-between; padding: 0 30px 0 32px; font-size: 23.500px; font-weight: 500; line-height: 48px; }
.status-left { display: flex; gap: 21px; letter-spacing: .5px; }
.date { letter-spacing: .75px; }
.status-right { display: flex; align-items: center; }
.wifi { width: 28px; height: 20px; fill: #fff; margin-right: 9px; }
.wifi .arc { fill: none; stroke: #fff; stroke-width: 4px; }
.battery { width: 53px; height: 24px; fill: #fff; margin-left: 5px; }
.battery .shell { fill: none; stroke: #fff; stroke-opacity: .42; stroke-width: 2px; }
.battery .nub { fill-opacity: .5; }
.nav-bar { height: 112px; display: grid; grid-template-columns: 1fr auto 1fr; align-items: center; padding: 0 32px; }
.back { width: 48px; height: 48px; fill: #fff; }
.nav-title { font-size: 38.500px; font-weight: 500; letter-spacing: 1px; line-height: 112px; }

.content { width: 1084px; display: flex; flex-direction: column; }
.intro { padding: 55px 12px 0; height: 238px; }
.event-title { font-size: 46.500px; font-weight: 700; letter-spacing: 1.400px; line-height: 68px; height: 68px; margin-bottom: 7px; }
.tag-row { display: flex; align-items: center; height: 48px; }
.chip { display: flex; align-items: center; justify-content: center; width: 416px; height: 46px; padding-bottom: 2px; border-radius: 23px; background: #e0e1e3; font-size: 27px; letter-spacing: .42px; }
.heart { width: 48px; height: 48px; margin-left: 36px; fill: #202020; }
.card { background: #e0e1e3; border-radius: 30px; padding: 10px 20px; box-shadow: 3px 4px 8px rgba(0,0,0,.36); }
.when { height: 224px; margin-bottom: 56px; display: flex; justify-content: space-between; align-items: flex-end; }
.where { height: 686px; }
.card-title { font-size: 38.500px; font-weight: 700; letter-spacing: 1.100px; line-height: 68px; padding-left: 1px; }
.row { display: flex; align-items: center; height: 68px; gap: 10px; font-size: 38.500px; letter-spacing: .64px; }
.t-date { letter-spacing: 1.080px; }
.t-time { letter-spacing: .75px; }
.icon { width: 40px; height: 40px; fill: #202020; }
.btn { font-family: inherit; border: 0; padding: 0; color: #fff; background: #7a003d; border-radius: 30px; display: flex; align-items: center; justify-content: center; height: 72px; box-shadow: 3px 5px 10px rgba(0,0,0,.38); }
.btn-bell { width: 120px; margin-bottom: 10px; }
.btn-bell svg { width: 48px; height: 48px; fill: #fff; }
.btn-nav { width: 210px; position: absolute; right: 16px; bottom: 12px; font-size: 27.500px; font-weight: 500; letter-spacing: .3px; padding-bottom: 2px; }

.map { position: relative; margin-top: 20px; width: 1044px; height: 500px; border: 4px solid #c8cbce; border-radius: 30px; overflow: hidden; }
.map-svg { display: block; width: 1036px; height: 492px; background: #f2efe9; }
.resid { fill: #dedddd; } .indus { fill: #f2dad9; } .orch { fill: url(#orchard); }
.park { fill: #c8facc; } .grass { fill: #cdebb0; } .edu { fill: #ffffe5; }
.lot { fill: #eee; stroke: #cfc6c6; stroke-width: 2; } .ped { fill: #dddde8; }
.pitch { fill: #aae0cb; stroke: #7fc9ae; stroke-width: 2; }
.scrub { fill: #c8d7ab; } .water { fill: #aad3df; } .reed { fill: #cdebb0; }
.canal { fill: none; stroke: #aad3df; stroke-width: 11; }
.shore { fill: none; stroke: #f2efe9; stroke-width: 9; }
.pier { fill: none; stroke: #f2efe9; stroke-width: 6; }
.bld { fill: #d9d0c9; stroke: #bfaea3; stroke-width: 3.500; }
.service { fill: none; stroke: #f6f4f4; stroke-width: 7; filter: drop-shadow(0 0 1px #888); }
.walk { fill: none; stroke: #fa8072; stroke-width: 4; stroke-dasharray: 8 8; }
.cycle { fill: none; stroke: #2f2ff5; stroke-width: 5; stroke-dasharray: 10 9; }
.dots { fill: none; stroke: #8d93ae; stroke-width: 6; stroke-dasharray: 6 20; }
.track { fill: none; stroke: #ac8327; stroke-width: 7; stroke-dasharray: 22 12; }
.tuft { fill: none; stroke: #8fb57c; stroke-width: 3; }
.street-case, .street-fill { fill: none; stroke-linecap: round; stroke-linejoin: round; }
.street-case { stroke: #c0bcba; stroke-width: 7.200; }
.street-fill { stroke: #fff; stroke-width: 5.600; }
.cyc { fill: none; stroke: #2f3ff5; stroke-width: 1.800; stroke-dasharray: 4 3; }
.mw-case { fill: none; stroke: #bbb; stroke-width: 12; } .mw { fill: none; stroke: #fff; stroke-width: 10.500; }
.ym-case, .yd-case, .or-case, .os-case, .on-case { fill: none; }
.ym-case { stroke: #8c9425; stroke-width: 19; } .ym { fill: none; stroke: #f7fabf; stroke-width: 17.200; }
.yd-case { stroke: #8c9425; stroke-width: 15.500; } .yd { fill: none; stroke: #f7fabf; stroke-width: 13.800; }
.or-case { stroke: #a5711d; stroke-width: 18.500; } .or { fill: none; stroke: #fcd6a4; stroke-width: 17; }
.on-case { stroke: #4b4132; stroke-width: 17.500; } .on { fill: none; stroke: #fcd6a4; stroke-width: 15.500; }
.os-case { stroke: #4b4132; stroke-width: 14; } .os { fill: none; stroke: #fcd6a4; stroke-width: 12; }
.ring-case { fill: #f7fabf; stroke: #f7fabf; stroke-width: 2; } .ring { fill: none; stroke: #f7fabf; stroke-width: 12; }
.lane { fill: none; stroke: #a58a9a; stroke-width: 1; stroke-dasharray: 3 4; }
.tram { fill: none; stroke: #6e6e6e; stroke-width: 3.800; }
.cross { fill: none; stroke: #777; stroke-width: 1.200; }
.lb text { font-family: "Noto Sans", "Open Sans", sans-serif; paint-order: stroke; stroke-linejoin: round; }
.lb .pl { font-size: 43px; fill: #4a4a4a; stroke: rgba(255,255,255,.6); stroke-width: 6; }
.lb .st { font-size: 36px; fill: #2a2a2a; stroke: rgba(255,255,255,.5); stroke-width: 4; }
.lb .big { font-size: 41px; }
.lb .halo { stroke: rgba(255,255,255,.85); stroke-width: 7; }
.lb .gr { font-size: 41px; font-style: italic; fill: #2f8a4b; stroke: rgba(255,255,255,.6); stroke-width: 5; }
.lb .rd { font-size: 42px; font-style: italic; fill: #b0202e; stroke: rgba(255,255,255,.7); stroke-width: 5; }
.lb .wt { font-size: 46px; font-style: italic; fill: #5c8fca; stroke: rgba(255,255,255,.5); stroke-width: 4; }
.lb .pk { font-size: 66px; fill: #8fc7e8; font-weight: 500; }
.lb .sh { font-size: 36px; fill: #5c4a2a; font-weight: 500; }
.shield { fill: #f3e1cc; stroke: #cbb094; stroke-width: 2; }
.home-indicator { width: 630px; height: 10px; border-radius: 5px; background: #000; margin-top: auto; margin-bottom: 16px; flex: none; }
```
